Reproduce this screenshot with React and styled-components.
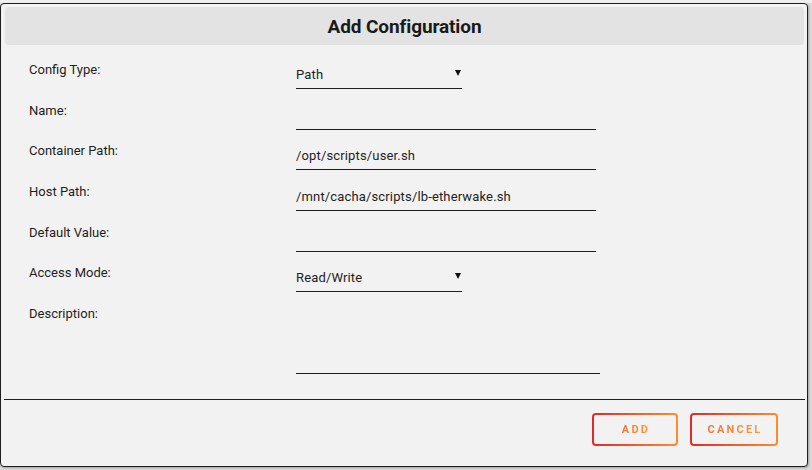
import React from 'react';
import styled, { createGlobalStyle } from 'styled-components';

const Global = createGlobalStyle`
  html, body { margin: 0; padding: 0; }
  body {
    background: #d9d9d9;
    font-family: Roboto, "Liberation Sans", sans-serif;
    width: 812px;
    height: 470px;
    overflow: hidden;
  }
`;

const Page = styled.div`
  position: relative;
  width: 812px;
  height: 470px;
  background: #d9d9d9;
  overflow: hidden;
`;

const BehindStrip = styled.div`
  height: 3px;
  overflow: hidden;
  background: #efefef;
  display: flex;
  align-items: flex-start;
  gap: 120px;
  padding-left: 126px;
  font-size: 13px;
  color: #3a4a66;
`;

const BehindText = styled.span`
  display: block;
  line-height: 14px;
  margin-top: -11px;
`;

const Dialog = styled.div`
  position: absolute;
  top: 3px;
  left: 0;
  width: 808px;
  height: 464px;
  box-sizing: border-box;
  border: 1px solid #1e1e1e;
  border-radius: 4px;
  background: #f2f2f2;
  display: flex;
  flex-direction: column;
  box-shadow: 1px 1px 2px rgba(0, 0, 0, 0.25);
`;

const Header = styled.div`
  margin: 3px 3px 0 4px;
  height: 38px;
  border-radius: 4px;
  background: #e3e3e3;
  display: flex;
  align-items: center;
  justify-content: center;
`;

const Title = styled.h2`
  margin: 0;
  font-family: Roboto, "Liberation Sans", sans-serif;
  font-weight: 700;
  font-size: 19px;
  color: #1a1a1a;
  letter-spacing: -0.1px;
`;

const Form = styled.div`
  flex: 1;
  padding: 16px 0 0 28px;
  display: flex;
  flex-direction: column;
`;

const Row = styled.div`
  display: grid;
  grid-template-columns: 267px 1fr;
  align-items: start;
  height: ${(p) => p.$h || 40.7}px;
`;

const Label = styled.div`
  font-size: 13px;
  line-height: 18px;
  color: #1e1e1e;
`;

const TextInput = styled.input`
  box-sizing: border-box;
  width: ${(p) => p.$w || 300}px;
  height: 28px;
  margin: 0;
  padding: 0;
  border: none;
  border-bottom: 1px solid #1e1e1e;
  background: transparent;
  font-family: Roboto, "Liberation Sans", sans-serif;
  font-size: 13px;
  letter-spacing: 0.15px;
  color: #1e1e1e;
  outline: none;
`;

const TextArea = styled.textarea`
  box-sizing: border-box;
  width: 304px;
  height: 69px;
  margin: 0;
  padding: 0;
  border: none;
  border-bottom: 1px solid #1e1e1e;
  background: transparent;
  resize: none;
  font-family: Roboto, "Liberation Sans", sans-serif;
  font-size: 13px;
  color: #1e1e1e;
  outline: none;
`;

const Select = styled.div`
  box-sizing: border-box;
  width: 166px;
  height: 28px;
  padding-top: 0;
  border-bottom: 1px solid #1e1e1e;
  display: flex;
  align-items: center;
  justify-content: space-between;
  font-size: 13px;
  letter-spacing: 0.15px;
  color: #1e1e1e;
`;

const Arrow = styled.svg`
  width: 6px;
  height: 6px;
  margin-right: 1px;
  margin-top: -4px;
`;

const Divider = styled.div`
  height: 1px;
  margin: 0 2px 0 3px;
  background: #1e1e1e;
`;

const ButtonBar = styled.div`
  height: 66px;
  box-sizing: border-box;
  padding: 13px 29px 0 0;
  display: flex;
  justify-content: flex-end;
  align-items: flex-start;
  gap: 12px;
`;

const Button = styled.button`
  box-sizing: border-box;
  width: ${(p) => p.$w}px;
  height: 33px;
  border: 2px solid transparent;
  border-radius: 4px;
  background:
    linear-gradient(#f2f2f2, #f2f2f2) padding-box,
    linear-gradient(90deg, #e22828, #ff8c2f) border-box;
  padding: 0 0 0 2px;
  display: flex;
  align-items: center;
  justify-content: center;
  cursor: pointer;
`;

const ButtonText = styled.span`
  font-family: Roboto, "Liberation Sans", sans-serif;
  font-weight: 700;
  font-size: 11px;
  letter-spacing: 2.2px;
  background: linear-gradient(90deg, #f2733a, #ff9a3c);
  -webkit-background-clip: text;
  background-clip: text;
  color: transparent;
`;

const ArrowIcon = () => (
  <Arrow viewBox="0 0 6 6">
    <polygon points="0,0 6,0 3,6" fill="#111" />
  </Arrow>
);

export default function App() {
  return (
    <Page>
      <Global />
      <BehindStrip>
        <BehindText>Small</BehindText>
        <BehindText>▼</BehindText>
      </BehindStrip>
      <Dialog>
        <Header>
          <Title>Add Configuration</Title>
        </Header>
        <Form>
          <Row>
            <Label>Config Type:</Label>
            <Select>
              <span>Path</span>
              <ArrowIcon />
            </Select>
          </Row>
          <Row>
            <Label>Name:</Label>
            <TextInput defaultValue="" />
          </Row>
          <Row>
            <Label>Container Path:</Label>
            <TextInput defaultValue="/opt/scripts/user.sh" />
          </Row>
          <Row>
            <Label>Host Path:</Label>
            <TextInput defaultValue="/mnt/cacha/scripts/lb-etherwake.sh" />
          </Row>
          <Row>
            <Label>Default Value:</Label>
            <TextInput defaultValue="" />
          </Row>
          <Row>
            <Label>Access Mode:</Label>
            <Select>
              <span>Read/Write</span>
              <ArrowIcon />
            </Select>
          </Row>
          <Row $h={90}>
            <Label>Description:</Label>
            <TextArea defaultValue="" />
          </Row>
        </Form>
        <Divider />
        <ButtonBar>
          <Button $w={86}>
            <ButtonText>ADD</ButtonText>
          </Button>
          <Button $w={88}>
            <ButtonText>CANCEL</ButtonText>
          </Button>
        </ButtonBar>
      </Dialog>
    </Page>
  );
}
